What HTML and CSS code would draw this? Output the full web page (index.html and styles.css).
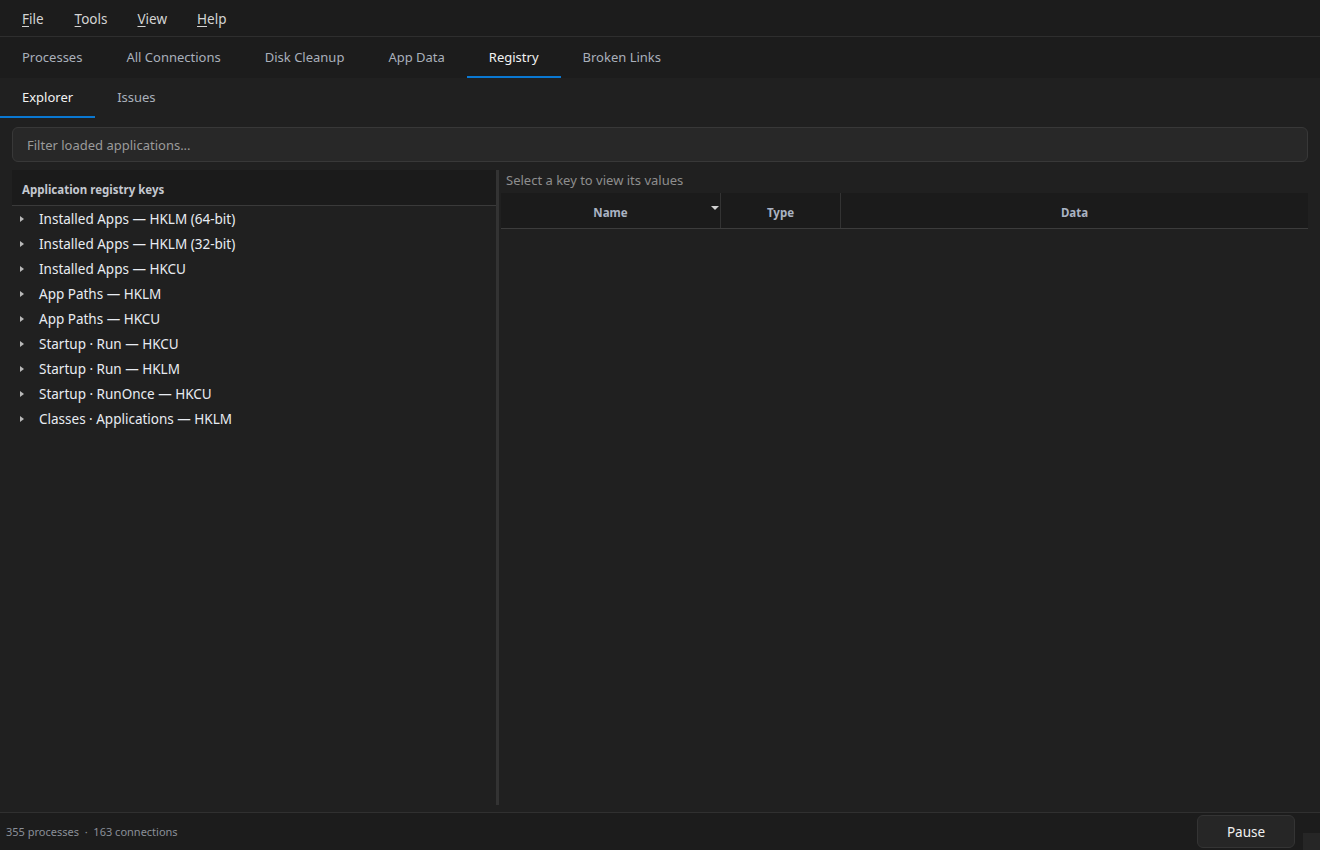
FILE: index.html
```html
<!DOCTYPE html>
<html>
<head>
    <meta charset="UTF-8">
    <title>Registry - System Monitor</title>
    <link rel="stylesheet" href="styles.css">
</head>
<body>
    <div class="app">
        <!-- Menu bar -->
        <div class="menu-bar">
            <span class="menu-item"><u>F</u>ile</span>
            <span class="menu-item"><u>T</u>ools</span>
            <span class="menu-item"><u>V</u>iew</span>
            <span class="menu-item"><u>H</u>elp</span>
        </div>

        <!-- Main tabs -->
        <div class="main-tabs">
            <div class="tab">Processes</div>
            <div class="tab">All Connections</div>
            <div class="tab">Disk Cleanup</div>
            <div class="tab">App Data</div>
            <div class="tab active">Registry</div>
            <div class="tab">Broken Links</div>
        </div>

        <!-- Registry sub tabs -->
        <div class="sub-tabs">
            <div class="sub-tab active">Explorer</div>
            <div class="sub-tab">Issues</div>
        </div>

        <div class="registry-page">
            <input type="text" class="filter-input" placeholder="Filter loaded applications...">

            <div class="split">
                <div class="key-panel">
                    <div class="panel-header">Application registry keys</div>
                    <ul class="key-tree">
                        <li><span class="caret"></span>Installed Apps — HKLM (64-bit)</li>
                        <li><span class="caret"></span>Installed Apps — HKLM (32-bit)</li>
                        <li><span class="caret"></span>Installed Apps — HKCU</li>
                        <li><span class="caret"></span>App Paths — HKLM</li>
                        <li><span class="caret"></span>App Paths — HKCU</li>
                        <li><span class="caret"></span>Startup · Run — HKCU</li>
                        <li><span class="caret"></span>Startup · Run — HKLM</li>
                        <li><span class="caret"></span>Startup · RunOnce — HKCU</li>
                        <li><span class="caret"></span>Classes · Applications — HKLM</li>
                    </ul>
                </div>

                <div class="splitter"></div>

                <div class="values-panel">
                    <div class="values-hint">Select a key to view its values</div>
                    <div class="values-header">
                        <div class="col col-name">Name<span class="sort-arrow"></span></div>
                        <div class="col col-type">Type</div>
                        <div class="col col-data">Data</div>
                    </div>
                </div>
            </div>
        </div>

        <!-- Status bar -->
        <div class="status-bar">
            <span class="status-text">355 processes &nbsp;·&nbsp; 163 connections</span>
            <button class="pause-btn">Pause</button>
            <span class="grip"></span>
        </div>
    </div>
</body>
</html>
```

FILE: styles.css
```css
* {
    box-sizing: border-box;
}

html, body {
    margin: 0;
    height: 100%;
}

body {
    background-color: #202020;
    color: #e6e6e6;
    font-family: "Segoe UI", "Noto Sans", "Open Sans", sans-serif;
    font-size: 13px;
    overflow: hidden;
}

.app {
    display: flex;
    flex-direction: column;
    height: 100vh;
}

/* Menu bar */
.menu-bar {
    display: flex;
    align-items: center;
    height: 37px;
    padding: 1px 0 0 22px;
    background-color: #1c1c1c;
    border-bottom: 1px solid #2e2e2e;
    font-size: 13.5px;
}

.menu-item {
    color: #d4d4d4;
    margin-right: 30px;
}

.menu-item:first-child {
    margin-right: 31px;
}

.menu-item u {
    text-underline-offset: 2px;
}

/* Main tabs */
.main-tabs {
    display: flex;
    height: 41px;
    background-color: #1c1c1c;
}

.tab {
    display: flex;
    align-items: center;
    padding: 0 22px;
    color: #a9b0bb;
    border-bottom: 2px solid transparent;
}

.tab.active {
    color: #f2f2f2;
    border-bottom-color: #0a78d2;
}

/* Sub tabs */
.sub-tabs {
    display: flex;
    height: 40px;
    background-color: #202020;
}

.sub-tab {
    display: flex;
    align-items: center;
    padding: 0 22px 1px;
    color: #a9b0bb;
    border-bottom: 2px solid transparent;
}

.sub-tab.active {
    color: #f2f2f2;
    border-bottom-color: #0a78d2;
}

/* Registry explorer */
.registry-page {
    flex: 1;
    display: flex;
    flex-direction: column;
    padding: 9px 12px 7px 12px;
    min-height: 0;
}

.filter-input {
    height: 35px;
    width: 100%;
    padding: 0 14px;
    background-color: #282828;
    border: 1px solid #383838;
    border-radius: 6px;
    color: #e6e6e6;
    font-family: inherit;
    font-size: 13px;
    outline: none;
}

.filter-input::placeholder {
    color: #9b9b9b;
}

.split {
    flex: 1;
    display: flex;
    margin-top: 8px;
    min-height: 0;
}

.key-panel {
    width: 484px;
}

.panel-header {
    height: 36px;
    display: flex;
    align-items: center;
    padding: 3px 0 0 10px;
    background-color: #1b1b1b;
    border-bottom: 1px solid #3a3a3a;
    color: #c4c8d0;
    font-size: 11.5px;
    font-weight: bold;
}

.key-tree {
    list-style: none;
    margin: 0;
    padding: 0;
}

.key-tree li {
    display: flex;
    align-items: center;
    height: 25px;
    color: #e8ecf2;
    font-size: 13.5px;
}

.caret {
    width: 0;
    height: 0;
    margin: 0 15px 0 8px;
    border-top: 3px solid transparent;
    border-bottom: 3px solid transparent;
    border-left: 4px solid #b8b8b8;
}

.splitter {
    width: 3px;
    background-color: #333333;
}

.values-panel {
    flex: 1;
    padding-left: 2px;
}

.values-hint {
    height: 23px;
    padding: 1px 0 0 5px;
    color: #8e8e8e;
    font-size: 13px;
}

.values-header {
    display: flex;
    height: 36px;
    background-color: #1b1b1b;
    border-bottom: 1px solid #3c3c3c;
}

.col {
    position: relative;
    display: flex;
    align-items: center;
    justify-content: center;
    padding-top: 3px;
    color: #aab3c3;
    font-size: 11.5px;
    font-weight: bold;
    border-right: 1px solid #333333;
}

.col-name {
    width: 220px;
}

.col-type {
    width: 120px;
}

.col-data {
    flex: 1;
    border-right: none;
}

.sort-arrow {
    position: absolute;
    right: 1px;
    top: 13px;
    border-left: 4px solid transparent;
    border-right: 4px solid transparent;
    border-top: 4px solid #d0d0d0;
}

/* Status bar */
.status-bar {
    display: flex;
    align-items: center;
    height: 38px;
    padding-left: 6px;
    background-color: #1c1c1c;
    border-top: 1px solid #303030;
}

.status-text {
    flex: 1;
    color: #8a8f98;
    font-size: 11px;
}

.pause-btn {
    width: 98px;
    height: 33px;
    background-color: #262626;
    border: 1px solid #343434;
    border-radius: 6px;
    color: #f0f0f0;
    font-family: inherit;
    font-size: 13.5px;
}

.grip {
    align-self: flex-end;
    width: 17px;
    height: 17px;
    margin-left: 8px;
    background-color: #262626;
}
```
